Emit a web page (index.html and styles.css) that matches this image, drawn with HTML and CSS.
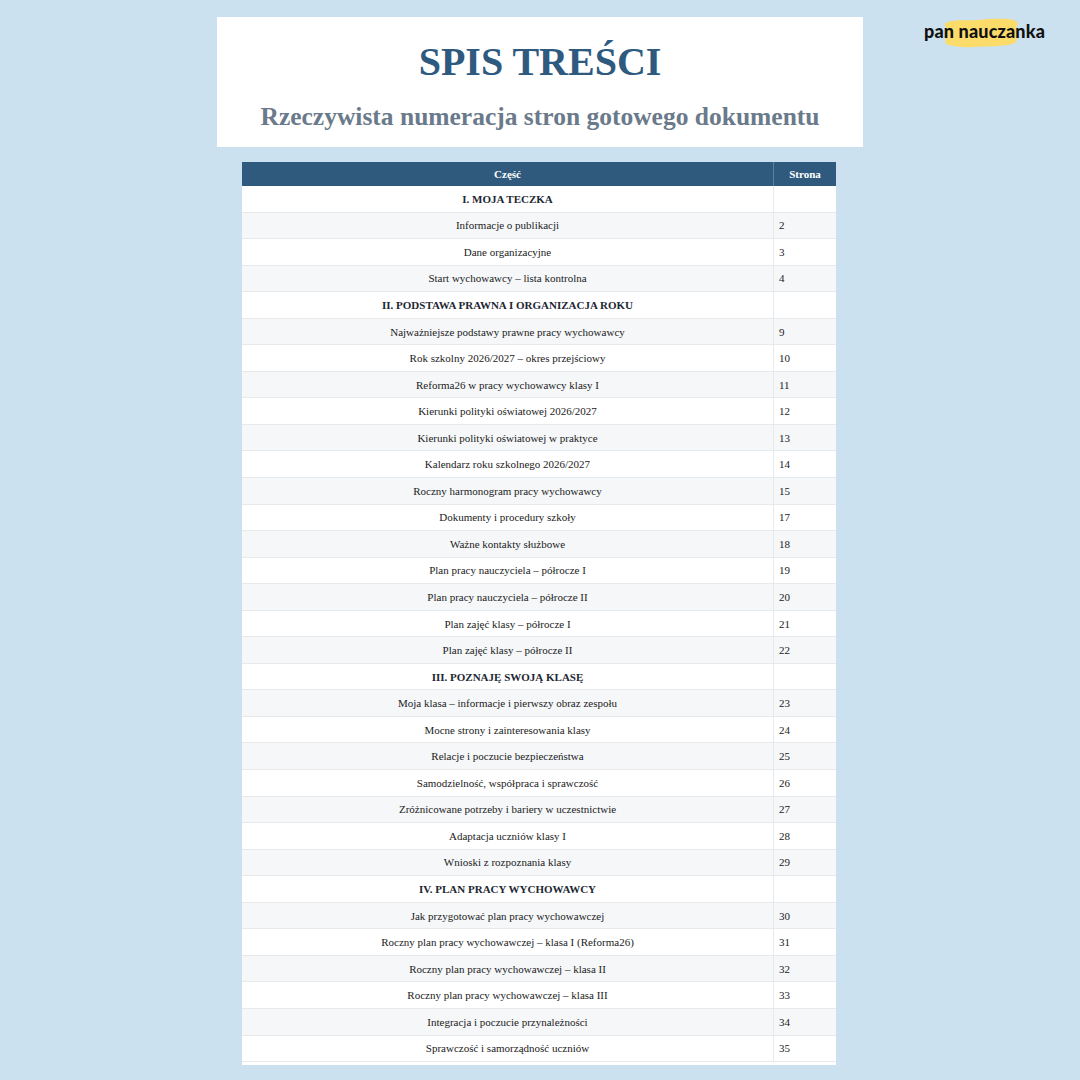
FILE: index.html
```html
<!DOCTYPE html>
<html lang="pl">
<head>
<meta charset="utf-8">
<title>Spis treści</title>
<link rel="stylesheet" href="styles.css">
</head>
<body>
<div class="page">
  <header class="title-box">
    <h1 class="title">SPIS TREŚCI</h1>
    <p class="subtitle">Rzeczywista numeracja stron gotowego dokumentu</p>
  </header>

  <div class="table-wrap">
    <table class="toc">
      <thead>
        <tr><th class="col-part">Część</th><th class="col-page">Strona</th></tr>
      </thead>
      <tbody>
        <tr class="section"><td>I. MOJA TECZKA</td><td></td></tr>
        <tr><td>Informacje o publikacji</td><td>2</td></tr>
        <tr><td>Dane organizacyjne</td><td>3</td></tr>
        <tr><td>Start wychowawcy – lista kontrolna</td><td>4</td></tr>
        <tr class="section"><td>II. PODSTAWA PRAWNA I ORGANIZACJA ROKU</td><td></td></tr>
        <tr><td>Najważniejsze podstawy prawne pracy wychowawcy</td><td>9</td></tr>
        <tr><td>Rok szkolny 2026/2027 – okres przejściowy</td><td>10</td></tr>
        <tr><td>Reforma26 w pracy wychowawcy klasy I</td><td>11</td></tr>
        <tr><td>Kierunki polityki oświatowej 2026/2027</td><td>12</td></tr>
        <tr><td>Kierunki polityki oświatowej w praktyce</td><td>13</td></tr>
        <tr><td>Kalendarz roku szkolnego 2026/2027</td><td>14</td></tr>
        <tr><td>Roczny harmonogram pracy wychowawcy</td><td>15</td></tr>
        <tr><td>Dokumenty i procedury szkoły</td><td>17</td></tr>
        <tr><td>Ważne kontakty służbowe</td><td>18</td></tr>
        <tr><td>Plan pracy nauczyciela – półrocze I</td><td>19</td></tr>
        <tr><td>Plan pracy nauczyciela – półrocze II</td><td>20</td></tr>
        <tr><td>Plan zajęć klasy – półrocze I</td><td>21</td></tr>
        <tr><td>Plan zajęć klasy – półrocze II</td><td>22</td></tr>
        <tr class="section"><td>III. POZNAJĘ SWOJĄ KLASĘ</td><td></td></tr>
        <tr><td>Moja klasa – informacje i pierwszy obraz zespołu</td><td>23</td></tr>
        <tr><td>Mocne strony i zainteresowania klasy</td><td>24</td></tr>
        <tr><td>Relacje i poczucie bezpieczeństwa</td><td>25</td></tr>
        <tr><td>Samodzielność, współpraca i sprawczość</td><td>26</td></tr>
        <tr><td>Zróżnicowane potrzeby i bariery w uczestnictwie</td><td>27</td></tr>
        <tr><td>Adaptacja uczniów klasy I</td><td>28</td></tr>
        <tr><td>Wnioski z rozpoznania klasy</td><td>29</td></tr>
        <tr class="section"><td>IV. PLAN PRACY WYCHOWAWCY</td><td></td></tr>
        <tr><td>Jak przygotować plan pracy wychowawczej</td><td>30</td></tr>
        <tr><td>Roczny plan pracy wychowawczej – klasa I (Reforma26)</td><td>31</td></tr>
        <tr><td>Roczny plan pracy wychowawczej – klasa II</td><td>32</td></tr>
        <tr><td>Roczny plan pracy wychowawczej – klasa III</td><td>33</td></tr>
        <tr><td>Integracja i poczucie przynależności</td><td>34</td></tr>
        <tr><td>Sprawczość i samorządność uczniów</td><td>35</td></tr>
      </tbody>
    </table>
  </div>

  <div class="brand">
    <svg class="brand-brush" width="76" height="30" viewBox="0 0 76 30" aria-hidden="true">
      <path d="M3 5 C10 1 22 3 34 2 C48 1 60 0 71 2 C75 3 76 7 73 9 C76 11 76 16 73 18 C75 21 74 25 69 26 C58 29 44 28 31 29 C21 30 11 28 5 27 C1 25 2 21 4 19 C0 16 1 12 4 10 C1 8 1 6 3 5 Z" fill="#fbdc6b"/>
    </svg>
    <span class="brand-text">pan nauczanka</span>
  </div>
</div>
</body>
</html>
```

FILE: styles.css
```css
html, body {
  margin: 0;
  padding: 0;
}

body {
  background: #cce1ef;
  width: 1080px;
  height: 1080px;
  overflow: hidden;
  font-family: "Liberation Serif", "Times New Roman", serif;
}

.page {
  position: relative;
  width: 1080px;
  height: 1080px;
  display: flex;
  flex-direction: column;
  align-items: center;
  padding-top: 17px;
  box-sizing: border-box;
}

.title-box {
  width: 646px;
  height: 130px;
  background: #ffffff;
  box-sizing: border-box;
  display: flex;
  flex-direction: column;
  align-items: center;
  padding-top: 22px;
}

.title {
  margin: 0;
  font-family: "Liberation Serif", "Times New Roman", serif;
  font-weight: bold;
  font-size: 40px;
  line-height: 46px;
  color: #2f5a80;
}

.subtitle {
  margin: 17px 0 0;
  font-family: "Liberation Serif", "Times New Roman", serif;
  font-weight: bold;
  font-size: 25.5px;
  line-height: 30px;
  color: #6a7a8b;
}

.table-wrap {
  margin-top: 15px;
  width: 594px;
  background: #ffffff;
  padding-bottom: 3px;
  margin-left: -2px;
}

.toc {
  width: 594px;
  border-collapse: collapse;
  table-layout: fixed;
  font-size: 11px;
  color: #222222;
}

.toc th {
  background: #2f5a7e;
  color: #ffffff;
  font-weight: bold;
  font-size: 11px;
  height: 24px;
  padding: 0;
  text-align: center;
}

.toc th.col-part {
  width: 531px;
}

.toc th.col-page {
  width: 62px;
  border-left: 1px solid #5e7f9b;
}

.toc td {
  height: 25.55px;
  padding: 0;
  border-bottom: 1px solid #e7eaed;
  text-align: center;
  vertical-align: middle;
}

.toc td + td {
  text-align: left;
  padding-left: 5px;
  border-left: 1px solid #e7eaed;
}

.toc tbody tr:nth-child(even) {
  background: #f5f7f9;
}

.toc tr.section td {
  font-weight: bold;
  color: #1d2733;
}

.brand {
  position: absolute;
  top: 18px;
  left: 924px;
  width: 126px;
  height: 30px;
}

.brand-brush {
  position: absolute;
  left: 19px;
  top: 0;
}

.brand-text {
  position: absolute;
  left: 0;
  top: 3px;
  font-family: "Lato", "DejaVu Sans", sans-serif;
  font-weight: 900;
  font-size: 18px;
  line-height: 20px;
  color: #111111;
  letter-spacing: 0.15px;
  white-space: nowrap;
}
```
